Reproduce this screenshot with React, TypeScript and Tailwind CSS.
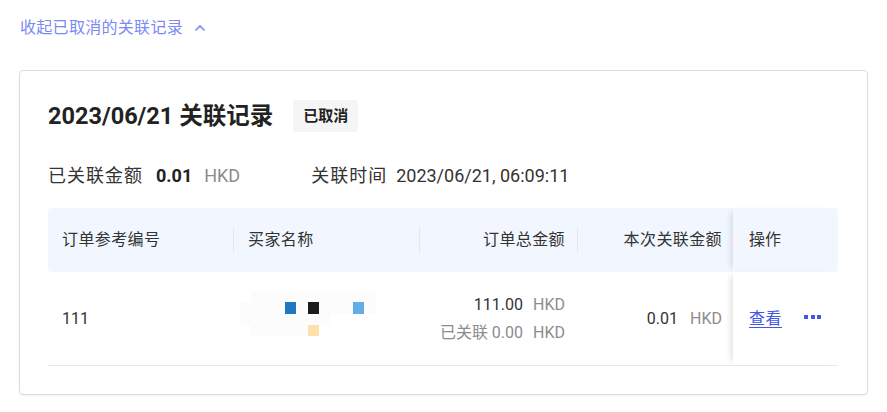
import React from "react";

const FONT = { fontFamily: 'Roboto, "Noto Sans CJK SC", sans-serif' };

function Mosaic() {
  const cells: Record<string, string> = {
    "1-4": "#1f77c0",
    "1-6": "#1c1c1c",
    "1-10": "#62aee8",
    "3-6": "#fde3a9",
  };
  const items = [];
  for (let r = 0; r < 4; r++) {
    for (let c = 0; c < 13; c++) {
      const key = `${r}-${c}`;
      const color = cells[key];
      const faint = (r === 0 && c > 0 && c < 12) || (r === 1 && c < 12) || (r === 2 && c < 8) || (r === 3 && c > 0 && c < 7);
      items.push(
        <div
          key={key}
          className="w-[11.3px] h-[11.3px]"
          style={{ background: color ? color : faint ? "#fcfcfc" : "transparent" }}
        />
      );
    }
  }
  return <div className="grid grid-cols-[repeat(13,11.3px)] grid-rows-[repeat(4,11.3px)] mb-[10px]">{items}</div>;
}

export default function App() {
  return (
    <div className="bg-white w-[887px] h-[412px] overflow-hidden text-[#333]" style={FONT}>
      <div className="pl-[20px] pt-[16px] flex items-center h-[40px] text-[16px] leading-[24px] text-[#7c89f3]">
        <span className="tracking-[0.3px]">收起已取消的关联记录</span>
        <svg className="ml-[11px]" width="12" height="8" viewBox="0 0 12 8" fill="none">
          <path d="M1.5 6.5 L6 2 L10.5 6.5" stroke="#7c89f3" strokeWidth="1.6" />
        </svg>
      </div>

      <div className="ml-[19px] mt-[30px] w-[849px] border border-[#dcdcdc] rounded-[4px] px-[28px] pt-[29px] pb-[28px] shadow-[0_1px_2px_rgba(0,0,0,0.06)]">
        <div className="flex items-center h-[32px]">
          <span className="text-[23.5px] font-bold text-[#222] leading-[32px]">2023/06/21 关联记录</span>
          <span className="ml-[20px] h-[32px] px-[10px] rounded-[4px] bg-[#f5f5f5] text-[15px] font-bold text-[#222] flex items-center">
            已取消
          </span>
        </div>

        <div className="mt-[31px] flex items-center text-[18px] leading-[26px]">
          <span className="text-[#333] tracking-[1px]">已关联金额</span>
          <span className="ml-[13px] font-bold text-[#222]">0.01</span>
          <span className="ml-[12px] text-[#8c8c8c]">HKD</span>
          <span className="ml-[71px] text-[#333] tracking-[1px]">关联时间</span>
          <span className="ml-[9px] text-[#333]">2023/06/21, 06:09:11</span>
        </div>

        <div className="mt-[19px] w-[790px] text-[16px]">
          <div className="flex h-[64px] bg-[#f2f6fe] rounded-[4px] items-center">
            <div className="w-[186px] h-full flex items-center pl-[14px] relative tracking-[0.4px]">
              订单参考编号
              <div className="absolute right-0 top-[19px] h-[26px] w-px bg-[#e3e7f0]" />
            </div>
            <div className="w-[186px] h-full flex items-center pl-[14px] relative tracking-[0.4px]">
              买家名称
              <div className="absolute right-0 top-[19px] h-[26px] w-px bg-[#e3e7f0]" />
            </div>
            <div className="w-[158px] h-full flex items-center justify-end pr-[13px] relative tracking-[0.4px]">
              订单总金额
              <div className="absolute right-0 top-[19px] h-[26px] w-px bg-[#e3e7f0]" />
            </div>
            <div className="w-[155px] h-full flex items-center justify-end pr-[11px] tracking-[0.4px]">本次关联金额</div>
            <div className="w-[105px] h-full flex items-center pl-[16px] bg-[#f2f6fe] rounded-r-[4px] shadow-[-6px_0_6px_-4px_rgba(0,0,0,0.12)]">
              操作
            </div>
          </div>

          <div className="flex h-[94px] border-b border-[#e8e8e8] items-stretch">
            <div className="w-[186px] flex items-center pl-[14px]">111</div>
            <div className="w-[186px] flex items-center pl-[6px]">
              <Mosaic />
            </div>
            <div className="w-[158px] flex flex-col items-end justify-center pr-[13px] leading-[28px]">
              <div>
                <span className="text-[#333]">111.00</span>
                <span className="ml-[10px] text-[#8c8c8c]">HKD</span>
              </div>
              <div className="text-[#8c8c8c]">
                <span>已关联 0.00</span>
                <span className="ml-[10px]">HKD</span>
              </div>
            </div>
            <div className="w-[155px] flex items-center justify-end pr-[11px]">
              <span className="text-[#333]">0.01</span>
              <span className="ml-[12px] text-[#8c8c8c]">HKD</span>
            </div>
            <div className="w-[105px] flex items-center pl-[16px] bg-white shadow-[-6px_0_6px_-4px_rgba(0,0,0,0.12)]">
              <span className="text-[#4257e8] underline underline-offset-[3px] tracking-[0.5px]">查看</span>
              <span className="ml-[22px] flex gap-[2.5px] items-center mb-[4px]">
                <span className="w-[4px] h-[4px] bg-[#4257e8]" />
                <span className="w-[4px] h-[4px] bg-[#4257e8]" />
                <span className="w-[4px] h-[4px] bg-[#4257e8]" />
              </span>
            </div>
          </div>
        </div>
      </div>
    </div>
  );
}
